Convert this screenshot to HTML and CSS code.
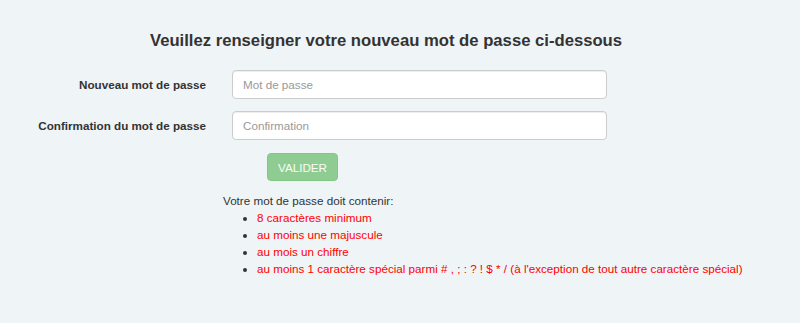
FILE: index.html
```html
<!DOCTYPE html>
<html lang="fr">
<head>
    <meta charset="UTF-8">
    <meta name="viewport" content="width=device-width, initial-scale=1.0">
    <title>Nouveau mot de passe</title>
    <link rel="stylesheet" href="styles.css">
</head>
<body>
    <div class="container">
        <h1>Veuillez renseigner votre nouveau mot de passe ci-dessous</h1>

        <form class="reset-form">
            <div class="form-row">
                <label for="password">Nouveau mot de passe</label>
                <input type="password" id="password" placeholder="Mot de passe">
            </div>

            <div class="form-row">
                <label for="confirm">Confirmation du mot de passe</label>
                <input type="password" id="confirm" placeholder="Confirmation">
            </div>

            <div class="form-actions">
                <button type="submit" class="btn-success" disabled>VALIDER</button>
            </div>
        </form>

        <div class="rules">
            <p>Votre mot de passe doit contenir:</p>
            <ul>
                <li><span class="rule-ko">8 caractères minimum</span></li>
                <li><span class="rule-ko">au moins une majuscule</span></li>
                <li><span class="rule-ko">au mois un chiffre</span></li>
                <li><span class="rule-ko">au moins 1 caractère spécial parmi # , ; : ? ! $ * / (à l'exception de tout autre caractère spécial)</span></li>
            </ul>
        </div>
    </div>
</body>
</html>
```

FILE: styles.css
```css
:root {
    --bg-color: #eff4f7;
    --text-color: #333333;
    --border-color: #cccccc;
    --placeholder-color: #999999;
    --success-color: #5cb85c;
    --danger-color: #ff0000;
}

html, body {
    margin: 0;
    padding: 0;
    background-color: var(--bg-color);
}

body {
    font-family: 'Liberation Sans', Arial, Helvetica, sans-serif;
    font-size: 11.67px;
    line-height: 17px;
    color: var(--text-color);
}

.container {
    width: 772px;
    padding-top: 31px;
}

h1 {
    margin: 0 0 19px 0;
    font-size: 16.67px;
    line-height: 20px;
    text-align: center;
}

.form-row {
    display: grid;
    grid-template-columns: 206px 375px;
    column-gap: 26px;
    align-items: center;
    margin-bottom: 12px;
}

.form-row label {
    text-align: right;
    font-weight: bold;
}

.form-row input {
    box-sizing: border-box;
    height: 29px;
    padding: 0 10px;
    border: 1px solid var(--border-color);
    border-radius: 4px;
    background-color: white;
    font-family: inherit;
    font-size: 11.67px;
    color: var(--text-color);
    box-shadow: inset 0 1px 1px rgba(0,0,0,0.075);
}

.form-row input::placeholder {
    color: var(--placeholder-color);
}

.form-actions {
    padding-left: 267px;
    margin-top: 13px;
}

button {
    height: 28px;
    padding: 0 10px;
    border: 1px solid transparent;
    border-radius: 4px;
    font-family: inherit;
    font-size: 11.67px;
    color: white;
    cursor: pointer;
}

.btn-success {
    background-color: var(--success-color);
    border-color: #4cae4c;
}

button:disabled {
    opacity: 0.65;
    cursor: not-allowed;
}

.rules {
    padding-left: 223px;
    margin-top: 11px;
}

.rules p {
    margin: 0;
}

.rules ul {
    margin: 0;
    padding-left: 34px;
}

.rule-ko {
    color: var(--danger-color);
}
```
